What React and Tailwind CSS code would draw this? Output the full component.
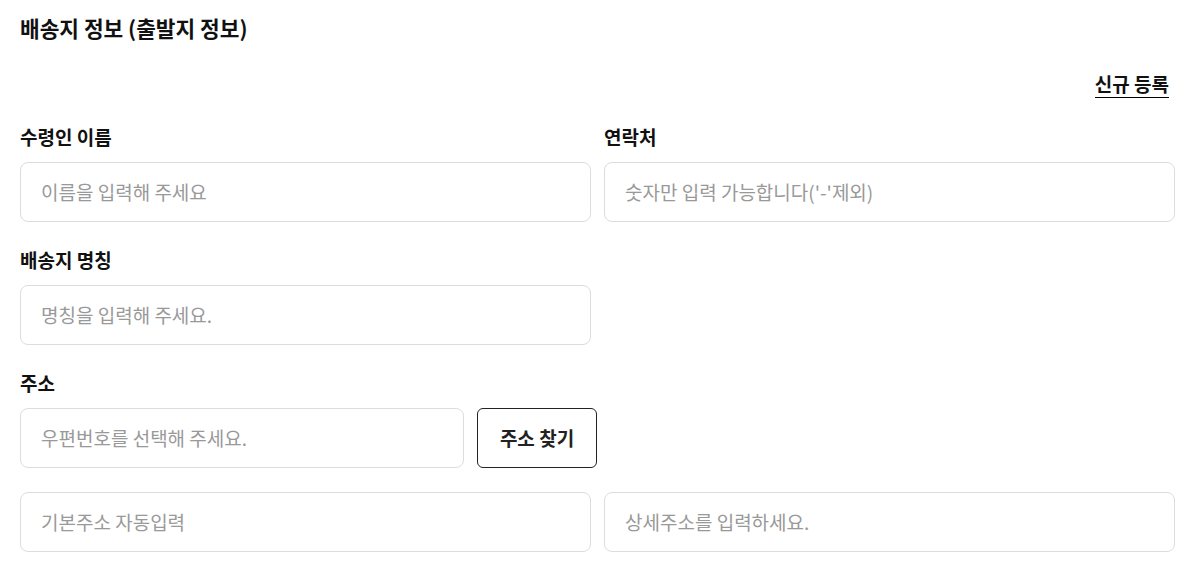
import React from 'react';

const font = { fontFamily: '"Noto Sans CJK KR", "Noto Sans", sans-serif' };

function Field({ placeholder, className = '' }) {
    return (
        <input
            type="text"
            placeholder={placeholder}
            className={`h-[60px] w-full rounded-lg border border-[#dddddd] bg-white px-5 pb-[2px] text-[19px] text-[#222] outline-none placeholder:text-[#999999] ${className}`}
        />
    );
}

function Label({ children }) {
    return <div className="mb-[13px] text-[19px] font-bold leading-6 text-[#111]">{children}</div>;
}

export default function App() {
    return (
        <div className="w-[1175px] bg-white pl-5 pt-[14px]" style={font}>
            <h2 className="text-[21.4px] font-bold leading-7 text-[#111]">배송지 정보 (출발지 정보)</h2>

            <div className="mt-[30px] flex justify-end pr-[6px]">
                <button className="border-b border-black pb-[1px] text-[19px] font-bold leading-6 text-[#111]">
                    신규 등록
                </button>
            </div>

            <div className="mt-[27px] grid grid-cols-2 gap-x-[13px]">
                <div>
                    <Label>수령인 이름</Label>
                    <Field placeholder="이름을 입력해 주세요" />
                </div>
                <div>
                    <Label>연락처</Label>
                    <Field placeholder="숫자만 입력 가능합니다('-'제외)" />
                </div>
            </div>

            <div className="mt-[26px] grid grid-cols-2 gap-x-[13px]">
                <div>
                    <Label>배송지 명칭</Label>
                    <Field placeholder="명칭을 입력해 주세요." />
                </div>
            </div>

            <div className="mt-[26px]">
                <Label>주소</Label>
                <div className="flex gap-[13px]">
                    <div className="w-[444px]">
                        <Field placeholder="우편번호를 선택해 주세요." />
                    </div>
                    <button className="h-[60px] w-[120px] rounded-md border border-[#222] bg-white text-[19px] font-bold text-[#222]">
                        주소 찾기
                    </button>
                </div>
                <div className="mt-6 grid grid-cols-2 gap-x-[13px]">
                    <Field placeholder="기본주소 자동입력" />
                    <Field placeholder="상세주소를 입력하세요." />
                </div>
            </div>
        </div>
    );
}
